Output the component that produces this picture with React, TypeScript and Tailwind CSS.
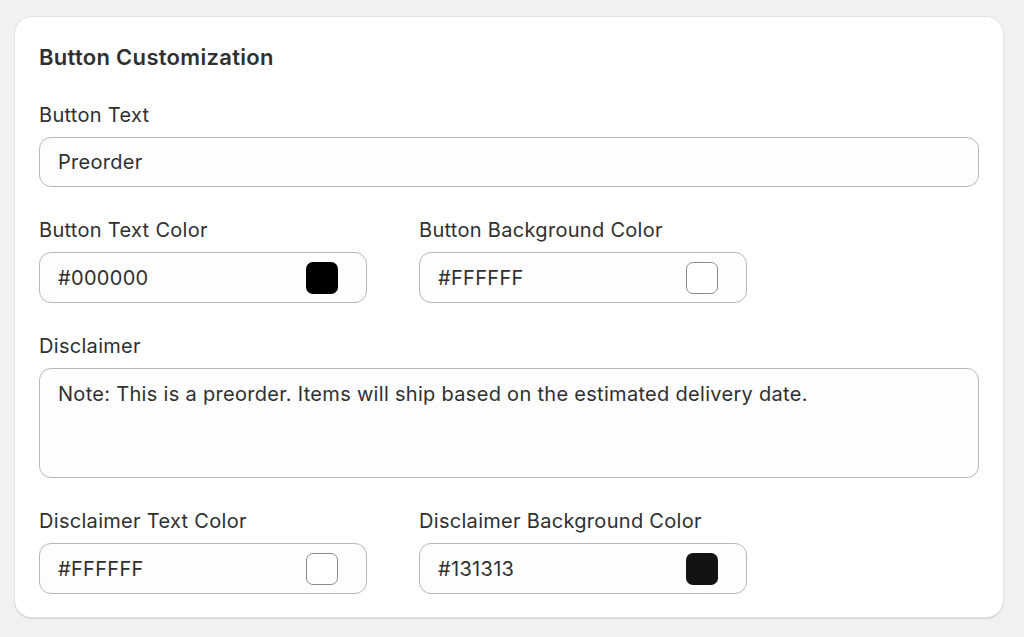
const font = { fontFamily: "Inter, 'Noto Sans', sans-serif" };

const Label = ({ children }: { children: string }) => (
  <label className="mb-[7px] block text-[20px] leading-[30px] tracking-[0.3px] text-[#303030]">
    {children}
  </label>
);

const ColorField = ({ label, value }: { label: string; value: string }) => {
  const light = value.toUpperCase() === "#FFFFFF";
  return (
    <div className="w-[328px]">
      <Label>{label}</Label>
      <div className="flex h-[51px] items-center justify-between rounded-[12px] border border-[#b8b8b8] bg-[#fdfdfd] pl-[18px] pr-[28px]">
        <span className="text-[20px] tracking-[0.3px] text-[#303030]">{value}</span>
        <span
          className={
            "h-[32px] w-[32px] rounded-[7px] " +
            (light ? "border-[1.5px] border-[#8a8a8a] bg-white" : "")
          }
          style={light ? undefined : { backgroundColor: value }}
        />
      </div>
    </div>
  );
};

const App = () => {
  return (
    <div className="min-h-screen bg-[#f1f1f1] pl-[14px] pr-[20px] pt-[16px]" style={font}>
      <div className="flex flex-col gap-[28px] rounded-[18px] border border-[#e3e3e3] bg-white px-6 pb-[23px] pt-[25px] shadow-[0_1px_0_0_#d4d4d4]">
        <h2 className="text-[22px] font-semibold leading-[30px] tracking-[0.3px] text-[#303030]">
          Button Customization
        </h2>
        <div>
          <Label>Button Text</Label>
          <input
            type="text"
            defaultValue="Preorder"
            className="h-[50px] w-full rounded-[12px] border border-[#b8b8b8] bg-[#fdfdfd] px-[18px] text-[20px] tracking-[0.3px] text-[#303030] outline-none"
          />
        </div>
        <div className="flex gap-[52px]">
          <ColorField label="Button Text Color" value="#000000" />
          <ColorField label="Button Background Color" value="#FFFFFF" />
        </div>
        <div>
          <Label>Disclaimer</Label>
          <textarea
            defaultValue="Note: This is a preorder. Items will ship based on the estimated delivery date."
            className="block h-[110px] w-full resize-none rounded-[12px] border border-[#b8b8b8] bg-[#fdfdfd] px-[18px] py-[11px] text-[20px] leading-[28px] tracking-[0.3px] text-[#303030] outline-none"
          />
        </div>
        <div className="flex gap-[52px]">
          <ColorField label="Disclaimer Text Color" value="#FFFFFF" />
          <ColorField label="Disclaimer Background Color" value="#131313" />
        </div>
      </div>
    </div>
  );
};

export default App;
